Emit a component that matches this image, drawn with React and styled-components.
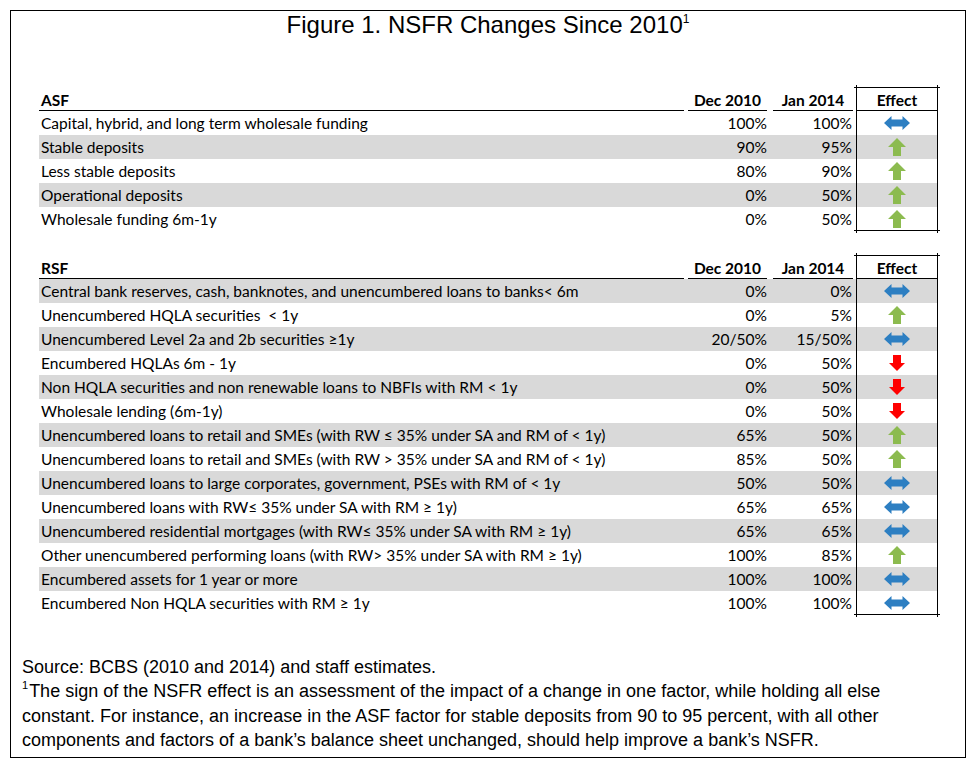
import React from 'react';
import styled, { createGlobalStyle, css } from 'styled-components';

const GlobalStyle = createGlobalStyle`
  body {
    margin: 0;
    background: #fff;
  }
`;

const Frame = styled.div`
  box-sizing: border-box;
  width: 956px;
  height: 748px;
  margin: 10px 0 0 10px;
  border: 1px solid #000;
  display: flex;
  flex-direction: column;
`;

const Title = styled.h1`
  margin: 0;
  font-family: 'Liberation Sans', Arial, sans-serif;
  font-weight: normal;
  font-size: 24px;
  line-height: 28px;
  text-align: center;
  color: #000;
  & > sup {
    font-size: 12px;
    vertical-align: top;
    line-height: 12px;
    position: relative;
    top: 2px;
  }
`;

const Table = styled.div`
  margin: ${p => p.$top}px 0 0 28px;
  width: 899px;
  font-family: Lato, 'Open Sans', sans-serif;
  font-size: 15.5px;
  color: #000;
`;

const Row = styled.div`
  display: grid;
  grid-template-columns: 647px 85px 85px 82px;
  height: 24px;
  background: ${p => (p.$shade ? '#d9d9d9' : 'transparent')};
`;

const HeadCell = styled.div`
  display: flex;
  align-items: center;
  justify-content: ${p => (p.$left ? 'flex-start' : 'center')};
  margin: ${p => p.$margin};
  padding: 3px 0 0 ${p => (p.$left ? '2px' : '0')};
  font-weight: bold;
  border-bottom: 1px solid #000;
`;

const Label = styled.div`
  display: flex;
  align-items: center;
  padding-left: 2px;
  white-space: pre;
`;

const Num = styled.div`
  display: flex;
  align-items: center;
  justify-content: flex-end;
  padding-right: 4px;
`;

// Excel-style print ticks where the box lines overrun the corners
const ticks = edge => css`
  &::before {
    content: '';
    position: absolute;
    left: -3px;
    right: -3px;
    ${edge}: -1px;
    height: 1px;
    background: #000;
  }
  &::after {
    content: '';
    position: absolute;
    left: -1px;
    right: -1px;
    ${edge}: -3px;
    height: 3px;
    border-left: 1px solid #000;
    border-right: 1px solid #000;
  }
`;

const EffectCell = styled.div`
  position: relative;
  box-sizing: border-box;
  display: flex;
  align-items: center;
  justify-content: center;
  border-left: 1px solid #000;
  border-right: 1px solid #000;
  border-top: ${p => (p.$head ? '1px solid #000' : 'none')};
  border-bottom: ${p => (p.$head || p.$last ? '1px solid #000' : 'none')};
  font-weight: ${p => (p.$head ? 'bold' : 'normal')};
  padding-top: ${p => (p.$head ? '2px' : '0')};
  ${p => p.$head && ticks('top')}
  ${p => p.$last && ticks('bottom')}
`;

const Footer = styled.div`
  margin: 40px 0 0 11px;
  font-family: 'Liberation Sans', Arial, sans-serif;
  font-size: 18px;
  line-height: 24.4px;
  color: #000;
  & > sup {
    font-size: 11px;
    vertical-align: top;
    line-height: 11px;
    position: relative;
    top: 1px;
    margin-right: 1px;
  }
`;

const BothArrow = () => (
  <svg width="26" height="14" viewBox="0 0 26 14">
    <polygon points="0,7 7.5,0 7.5,3.5 18.5,3.5 18.5,0 26,7 18.5,14 18.5,10.5 7.5,10.5 7.5,14" fill="#2d7fc2" />
  </svg>
);

const UpArrow = () => (
  <svg width="18" height="18" viewBox="0 0 18 18">
    <polygon points="9,0 18,9 13,9 13,18 5,18 5,9 0,9" fill="#8cbb4f" />
  </svg>
);

const DownArrow = () => (
  <svg width="16" height="16" viewBox="0 0 16 16">
    <polygon points="4,0 12,0 12,8 16,8 8,16 0,8 4,8" fill="#ff0000" />
  </svg>
);

const icons = { both: BothArrow, up: UpArrow, down: DownArrow };

const asfRows = [
  ['Capital, hybrid, and long term wholesale funding', '100%', '100%', 'both'],
  ['Stable deposits', '90%', '95%', 'up'],
  ['Less stable deposits', '80%', '90%', 'up'],
  ['Operational deposits', '0%', '50%', 'up'],
  ['Wholesale funding 6m-1y', '0%', '50%', 'up'],
];

const rsfRows = [
  ['Central bank reserves, cash, banknotes, and unencumbered loans to banks< 6m', '0%', '0%', 'both'],
  ['Unencumbered HQLA securities  < 1y', '0%', '5%', 'up'],
  ['Unencumbered Level 2a and 2b securities ≥1y', '20/50%', '15/50%', 'both'],
  ['Encumbered HQLAs 6m - 1y', '0%', '50%', 'down'],
  ['Non HQLA securities and non renewable loans to NBFIs with RM < 1y', '0%', '50%', 'down'],
  ['Wholesale lending (6m-1y)', '0%', '50%', 'down'],
  ['Unencumbered loans to retail and SMEs (with RW ≤ 35% under SA and RM of < 1y)', '65%', '50%', 'up'],
  ['Unencumbered loans to retail and SMEs (with RW > 35% under SA and RM of < 1y)', '85%', '50%', 'up'],
  ['Unencumbered loans to large corporates, government, PSEs with RM of < 1y', '50%', '50%', 'both'],
  ['Unencumbered loans with RW≤ 35% under SA with RM ≥ 1y)', '65%', '65%', 'both'],
  ['Unencumbered residential mortgages (with RW≤ 35% under SA with RM ≥ 1y)', '65%', '65%', 'both'],
  ['Other unencumbered performing loans (with RW> 35% under SA with RM ≥ 1y)', '100%', '85%', 'up'],
  ['Encumbered assets for 1 year or more', '100%', '100%', 'both'],
  ['Encumbered Non HQLA securities with RM ≥ 1y', '100%', '100%', 'both'],
];

const FactorTable = ({ title, rows, top, shadeOdd }) => (
  <Table $top={top}>
    <Row>
      <HeadCell $left $margin="0 2px 0 0">{title}</HeadCell>
      <HeadCell $margin="0 4px 0 2px">Dec 2010</HeadCell>
      <HeadCell $margin="0 3px 0 2px">Jan 2014</HeadCell>
      <EffectCell $head>Effect</EffectCell>
    </Row>
    {rows.map(([label, dec, jan, effect], i) => {
      const Icon = icons[effect];
      return (
        <Row key={label} $shade={shadeOdd ? i % 2 === 0 : i % 2 === 1}>
          <Label>{label}</Label>
          <Num>{dec}</Num>
          <Num>{jan}</Num>
          <EffectCell $last={i === rows.length - 1}>
            <Icon />
          </EffectCell>
        </Row>
      );
    })}
  </Table>
);

const App = () => (
  <>
    <GlobalStyle />
    <Frame>
      <Title>
        Figure 1. NSFR Changes Since 2010<sup>1</sup>
      </Title>
      <FactorTable title="ASF" rows={asfRows} top={48} />
      <FactorTable title="RSF" rows={rsfRows} top={24} shadeOdd />
      <Footer>
        Source: BCBS (2010 and 2014) and staff estimates.
        <br />
        <sup>1</sup>The sign of the NSFR effect is an assessment of the impact of a change in one factor, while holding all else
        <br />
        constant. For instance, an increase in the ASF factor for stable deposits from 90 to 95 percent, with all other
        <br />
        components and factors of a bank’s balance sheet unchanged, should help improve a bank’s NSFR.
      </Footer>
    </Frame>
  </>
);

export default App;
